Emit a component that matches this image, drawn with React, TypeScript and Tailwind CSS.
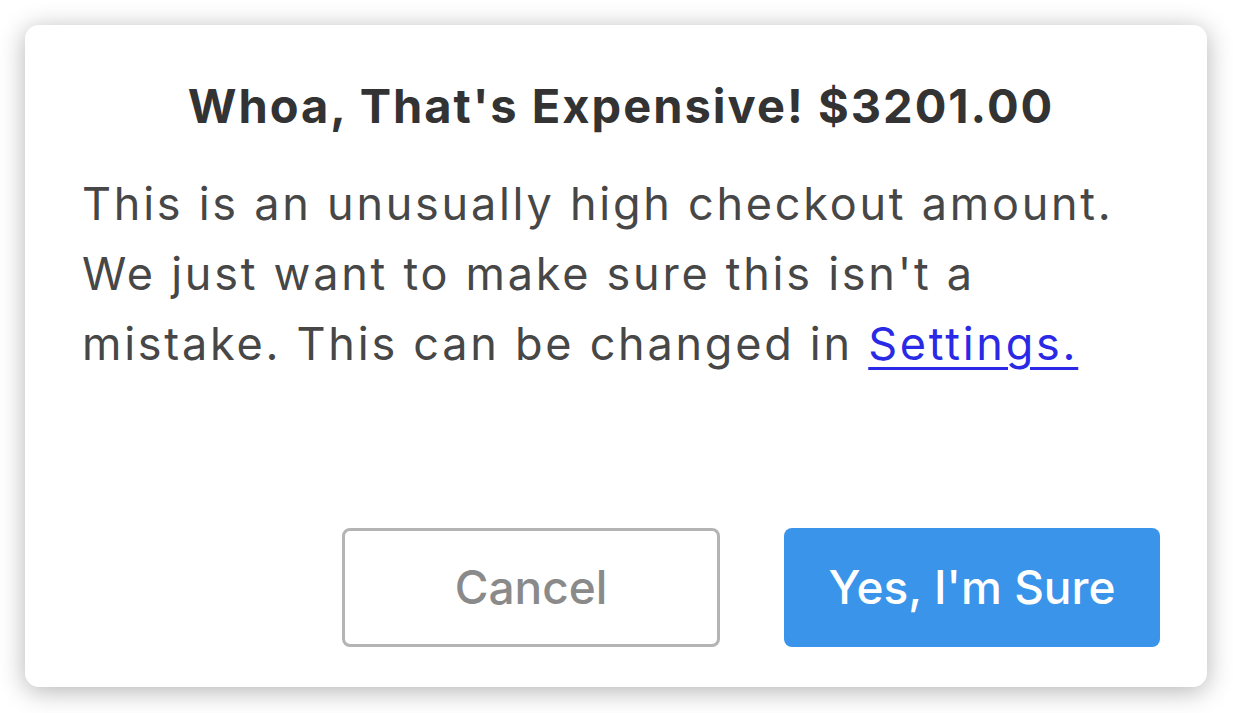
import React from "react";

export default function App() {
  return (
    <div className="min-h-[713px] w-[1233px] bg-white pt-[25px] pl-[25px]" style={{ fontFamily: "Inter, 'Liberation Sans', sans-serif" }}>
      <div className="flex h-[662px] w-[1182px] flex-col rounded-[14px] bg-white pt-[53px] pb-[40px] pl-[57px] pr-[47px] shadow-[0_4px_26px_rgba(0,0,0,0.3)]">
        <h1 className="text-center text-[47px] font-bold leading-[56px] tracking-[2px] text-[#333333]">
          Whoa, That's Expensive! $3201.00
        </h1>
        <p className="mt-[35px] text-[45px] leading-[70px] tracking-[2.75px] text-[#474747]">
          This is an unusually high checkout amount.
          <br />
          We just want to make sure this isn't a
          <br />
          mistake. This can be changed in{" "}
          <a href="#" className="text-[#2a2ae6] underline decoration-[3px] underline-offset-[7px]">
            Settings.
          </a>
        </p>
        <div className="mt-auto flex justify-end gap-[64px]">
          <button className="flex h-[119px] w-[378px] items-center justify-center rounded-[8px] border-[3px] border-[#b4b4b4] bg-white text-[46px] font-medium text-[#8a8a8a]">
            Cancel
          </button>
          <button className="flex h-[119px] w-[376px] items-center justify-center rounded-[8px] bg-[#3994ea] text-[46px] font-medium text-white">
            Yes, I'm Sure
          </button>
        </div>
      </div>
    </div>
  );
}
